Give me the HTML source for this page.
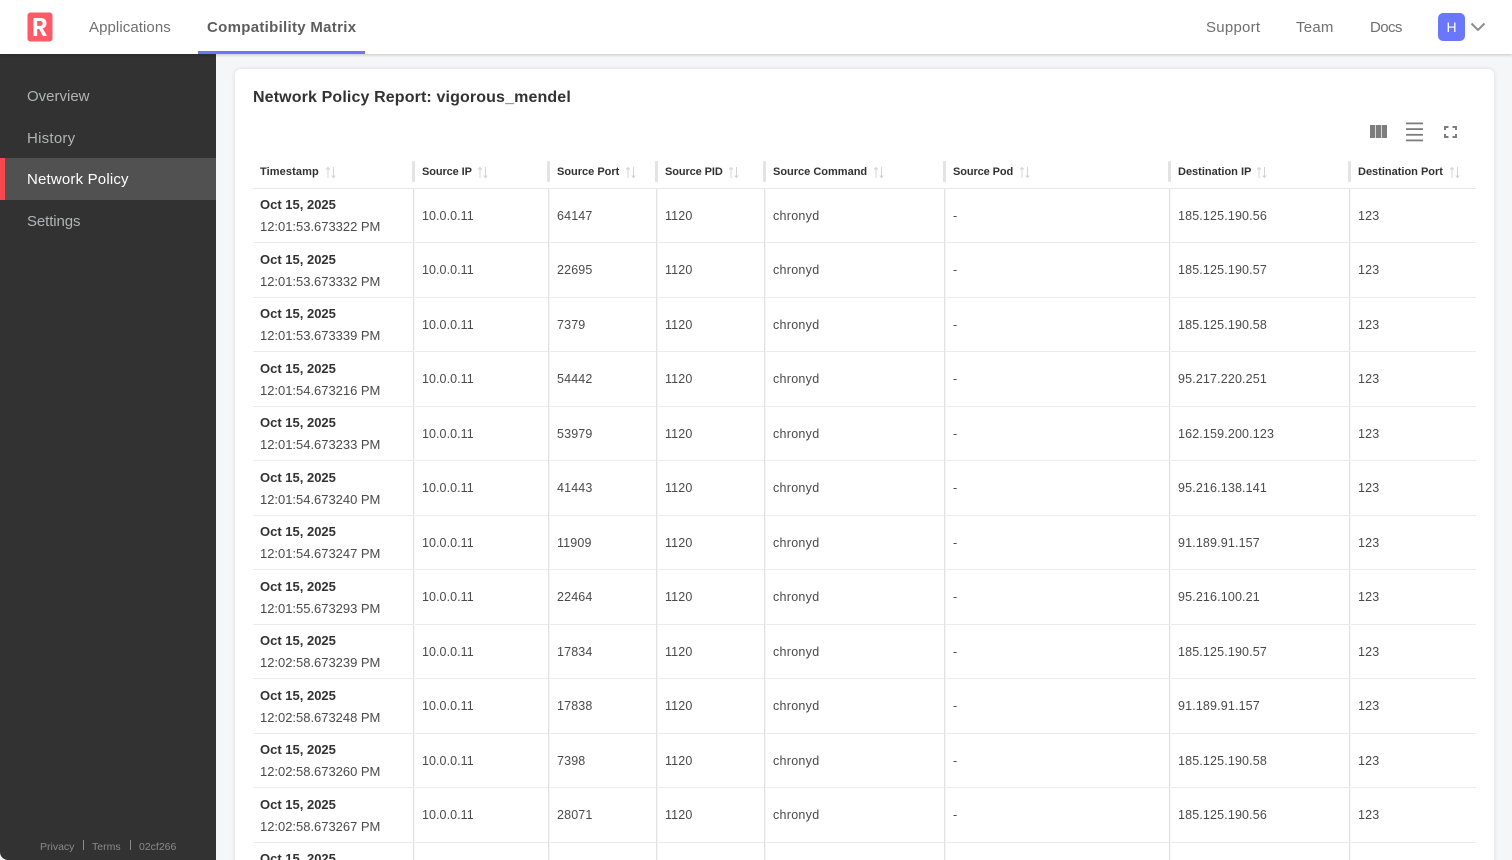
<!DOCTYPE html>
<html style="height:860px;overflow:hidden"><head><meta charset="utf-8"><style>
*{box-sizing:border-box}
html,body{margin:0;padding:0}
body{width:1512px;height:860px;overflow:hidden;background:#f5f6f8;position:relative;font-family:"Liberation Sans",sans-serif;color:#323232}
#wrap{position:absolute;left:0;top:0;width:1512px;height:860px;overflow:hidden}
.a{position:absolute;white-space:nowrap}
#top{left:0;top:0;width:1512px;height:54px;background:#fff;box-shadow:0 1px 3px rgba(0,0,0,.2);z-index:3}
#top .n{font-size:15px;color:#6f6f6f;top:18px;line-height:20px;letter-spacing:.25px}
#side{left:0;top:54px;width:216px;height:806px;background:#323232;border-bottom-left-radius:8px;z-index:2}
#side .s{left:27px;font-size:15px;color:#b0b4b4;line-height:20px}
#card{left:235px;top:69px;width:1259px;height:820px;background:#fff;border-radius:6px;box-shadow:0 0 4px rgba(0,0,0,.12)}
#table{left:253px;top:159px;width:1223px;font-size:12.5px;letter-spacing:.15px}
.hd{position:relative;height:29.5px;border-bottom:1px solid #e8e8e8}
.hd b{position:absolute;top:5px;line-height:16px;font-size:11px;color:#323232;letter-spacing:0}
.hd i{position:absolute;top:2px;width:3px;height:21px;margin-left:-1px;background:#e3e3e3;border-radius:1px}
.hd svg{position:absolute;top:7px}
.r{position:relative;height:54.5px;border-bottom:1px solid #ececec}
.r span{position:absolute;top:19px;line-height:16px;color:#4a4a4a}
.r em{position:absolute;top:0;bottom:-1px;width:2px;background:linear-gradient(90deg,#e2e2e2 50%,#f7f7f7 50%)}
.r .d{top:8.5px;font-weight:bold;font-size:13px;color:#323232;letter-spacing:0}
.r .t{top:30.5px;font-size:13px;color:#4a4a4a;letter-spacing:-.02px}
.r .c2{letter-spacing:.06px}.r .c5{letter-spacing:.28px}
.c1{left:7px}.c2{left:169px}.c3{left:304px}.c4{left:412px}.c5{left:520px}.c6{left:700px}.c7{left:925px}.c8{left:1105px}
.l1{left:160px}.l2{left:295px}.l3{left:403px}.l4{left:511px}.l5{left:691px}.l6{left:916px}.l7{left:1096px}
</style></head><body>
<div id="wrap">
<div class="a" id="top">
<svg class="a" style="left:27px;top:12px" width="26" height="30" viewBox="0 0 26 30"><rect x="0.5" y="0.5" width="25" height="29" rx="3" fill="#fb5a66"/><path fill-rule="evenodd" d="M6.500 24V6h7c4 0 6 2 6 5.300 0 2.600-1.400 4.400-3.800 5.100L20 24h-4.200l-3.500-7h-2.100v7zM10.200 13.900h3c1.600 0 2.400-.8 2.400-2.500S14.800 9 13.200 9h-3z" fill="#fff"/></svg>
<span class="a n" style="left:89px;letter-spacing:.08px">Applications</span>
<span class="a n" style="left:207px;font-weight:bold;color:#5d5d5d;letter-spacing:.3px">Compatibility Matrix</span>
<div class="a" style="left:198px;top:51px;width:167px;height:3px;background:#6a77fb"></div>
<span class="a n" style="left:1206px">Support</span>
<span class="a n" style="left:1296px">Team</span>
<span class="a n" style="left:1370px;letter-spacing:-.6px">Docs</span>
<div class="a" style="left:1438px;top:13px;width:27px;height:28px;border-radius:5px;background:#6a77fb;color:#fff;font-size:14px;line-height:28px;text-align:center">H</div>
<svg class="a" style="left:1470px;top:22px" width="16" height="10" viewBox="0 0 16 10"><path d="M1.500 1.500L8 8l6.500-6.500" fill="none" stroke="#8c8c8c" stroke-width="2"/></svg>
</div>
<div class="a" id="side">
<span class="a s" style="top:33px">Overview</span>
<span class="a s" style="top:75px;letter-spacing:.25px">History</span>
<div class="a" style="left:0;top:104px;width:216px;height:42px;background:#515151;border-left:5px solid #f7474f"></div>
<span class="a s" style="top:116px;color:#fff;letter-spacing:.18px">Network Policy</span>
<span class="a s" style="top:158px;letter-spacing:-.1px">Settings</span>
<span class="a" style="left:40px;top:786px;font-size:10.500px;line-height:14px;color:#8a8a8a">Privacy</span>
<div class="a" style="left:83px;top:786px;width:1px;height:10px;background:#8a8a8a"></div>
<span class="a" style="left:92px;top:786px;font-size:10.500px;line-height:14px;color:#8a8a8a">Terms</span>
<div class="a" style="left:130px;top:786px;width:1px;height:10px;background:#8a8a8a"></div>
<span class="a" style="left:139px;top:786px;font-size:10.500px;line-height:14px;color:#8a8a8a">02cf266</span>
</div>
<div class="a" id="card"></div>
<div class="a" style="left:253px;top:87px;font-size:16px;font-weight:bold;line-height:21px;color:#323232;letter-spacing:.13px">Network Policy Report: vigorous_mendel</div>
<svg class="a" style="left:1370px;top:122px" width="90" height="20" viewBox="0 0 90 20" fill="#7d7d7d"><rect x="0" y="3" width="5.300" height="13"/><rect x="6" y="3" width="5.300" height="13"/><rect x="12" y="3" width="5" height="13"/><rect x="36" y="0.500" width="17" height="1.800"/><rect x="36" y="6.200" width="17" height="1.800"/><rect x="36" y="11.900" width="17" height="1.800"/><rect x="36" y="17.500" width="17" height="1.800"/><path d="M75 8V5h3.500M82.500 5H86v3M86 12v3h-3.500M78.500 15H75v-3" fill="none" stroke="#7d7d7d" stroke-width="2"/></svg>
<div class="a" id="table">
<div class="hd">
<b class="c1" style="letter-spacing:.1px">Timestamp</b><svg style="left:72px" width="12" height="13" viewBox="0 0 12 13"><path d="M3 12V1.500M1.200 3.500L3 1.500 4.800 3.500M8.500 1v10.500M6.700 9.500l1.800 2 1.800-2" fill="none" stroke="#d4d4d4" stroke-width="1"/></svg>
<i class="l1"></i><b class="c2" style="letter-spacing:-.1px">Source IP</b><svg style="left:224px" width="12" height="13" viewBox="0 0 12 13"><path d="M3 12V1.500M1.200 3.500L3 1.500 4.800 3.500M8.500 1v10.500M6.700 9.500l1.800 2 1.800-2" fill="none" stroke="#d4d4d4" stroke-width="1"/></svg>
<i class="l2"></i><b class="c3">Source Port</b><svg style="left:372px" width="12" height="13" viewBox="0 0 12 13"><path d="M3 12V1.500M1.200 3.500L3 1.500 4.800 3.500M8.500 1v10.500M6.700 9.500l1.800 2 1.800-2" fill="none" stroke="#d4d4d4" stroke-width="1"/></svg>
<i class="l3"></i><b class="c4" style="letter-spacing:-.1px">Source PID</b><svg style="left:475px" width="12" height="13" viewBox="0 0 12 13"><path d="M3 12V1.500M1.200 3.500L3 1.500 4.800 3.500M8.500 1v10.500M6.700 9.500l1.800 2 1.800-2" fill="none" stroke="#d4d4d4" stroke-width="1"/></svg>
<i class="l4"></i><b class="c5">Source Command</b><svg style="left:620px" width="12" height="13" viewBox="0 0 12 13"><path d="M3 12V1.500M1.200 3.500L3 1.500 4.800 3.500M8.500 1v10.500M6.700 9.500l1.800 2 1.800-2" fill="none" stroke="#d4d4d4" stroke-width="1"/></svg>
<i class="l5"></i><b class="c6" style="letter-spacing:-.1px">Source Pod</b><svg style="left:766px" width="12" height="13" viewBox="0 0 12 13"><path d="M3 12V1.500M1.200 3.500L3 1.500 4.800 3.500M8.500 1v10.500M6.700 9.500l1.800 2 1.800-2" fill="none" stroke="#d4d4d4" stroke-width="1"/></svg>
<i class="l6"></i><b class="c7">Destination IP</b><svg style="left:1003px" width="12" height="13" viewBox="0 0 12 13"><path d="M3 12V1.500M1.200 3.500L3 1.500 4.800 3.500M8.500 1v10.500M6.700 9.500l1.800 2 1.800-2" fill="none" stroke="#d4d4d4" stroke-width="1"/></svg>
<i class="l7"></i><b class="c8">Destination Port</b><svg style="left:1196px" width="12" height="13" viewBox="0 0 12 13"><path d="M3 12V1.500M1.200 3.500L3 1.500 4.800 3.500M8.500 1v10.500M6.700 9.500l1.800 2 1.800-2" fill="none" stroke="#d4d4d4" stroke-width="1"/></svg>
</div>
<div class="r"><span class="c1 d">Oct 15, 2025</span><span class="c1 t">12:01:53.673322 PM</span><em class="l1"></em><span class="c2">10.0.0.11</span><em class="l2"></em><span class="c3">64147</span><em class="l3"></em><span class="c4">1120</span><em class="l4"></em><span class="c5">chronyd</span><em class="l5"></em><span class="c6">-</span><em class="l6"></em><span class="c7">185.125.190.56</span><em class="l7"></em><span class="c8">123</span></div>
<div class="r"><span class="c1 d">Oct 15, 2025</span><span class="c1 t">12:01:53.673332 PM</span><em class="l1"></em><span class="c2">10.0.0.11</span><em class="l2"></em><span class="c3">22695</span><em class="l3"></em><span class="c4">1120</span><em class="l4"></em><span class="c5">chronyd</span><em class="l5"></em><span class="c6">-</span><em class="l6"></em><span class="c7">185.125.190.57</span><em class="l7"></em><span class="c8">123</span></div>
<div class="r"><span class="c1 d">Oct 15, 2025</span><span class="c1 t">12:01:53.673339 PM</span><em class="l1"></em><span class="c2">10.0.0.11</span><em class="l2"></em><span class="c3">7379</span><em class="l3"></em><span class="c4">1120</span><em class="l4"></em><span class="c5">chronyd</span><em class="l5"></em><span class="c6">-</span><em class="l6"></em><span class="c7">185.125.190.58</span><em class="l7"></em><span class="c8">123</span></div>
<div class="r"><span class="c1 d">Oct 15, 2025</span><span class="c1 t">12:01:54.673216 PM</span><em class="l1"></em><span class="c2">10.0.0.11</span><em class="l2"></em><span class="c3">54442</span><em class="l3"></em><span class="c4">1120</span><em class="l4"></em><span class="c5">chronyd</span><em class="l5"></em><span class="c6">-</span><em class="l6"></em><span class="c7">95.217.220.251</span><em class="l7"></em><span class="c8">123</span></div>
<div class="r"><span class="c1 d">Oct 15, 2025</span><span class="c1 t">12:01:54.673233 PM</span><em class="l1"></em><span class="c2">10.0.0.11</span><em class="l2"></em><span class="c3">53979</span><em class="l3"></em><span class="c4">1120</span><em class="l4"></em><span class="c5">chronyd</span><em class="l5"></em><span class="c6">-</span><em class="l6"></em><span class="c7">162.159.200.123</span><em class="l7"></em><span class="c8">123</span></div>
<div class="r"><span class="c1 d">Oct 15, 2025</span><span class="c1 t">12:01:54.673240 PM</span><em class="l1"></em><span class="c2">10.0.0.11</span><em class="l2"></em><span class="c3">41443</span><em class="l3"></em><span class="c4">1120</span><em class="l4"></em><span class="c5">chronyd</span><em class="l5"></em><span class="c6">-</span><em class="l6"></em><span class="c7">95.216.138.141</span><em class="l7"></em><span class="c8">123</span></div>
<div class="r"><span class="c1 d">Oct 15, 2025</span><span class="c1 t">12:01:54.673247 PM</span><em class="l1"></em><span class="c2">10.0.0.11</span><em class="l2"></em><span class="c3">11909</span><em class="l3"></em><span class="c4">1120</span><em class="l4"></em><span class="c5">chronyd</span><em class="l5"></em><span class="c6">-</span><em class="l6"></em><span class="c7">91.189.91.157</span><em class="l7"></em><span class="c8">123</span></div>
<div class="r"><span class="c1 d">Oct 15, 2025</span><span class="c1 t">12:01:55.673293 PM</span><em class="l1"></em><span class="c2">10.0.0.11</span><em class="l2"></em><span class="c3">22464</span><em class="l3"></em><span class="c4">1120</span><em class="l4"></em><span class="c5">chronyd</span><em class="l5"></em><span class="c6">-</span><em class="l6"></em><span class="c7">95.216.100.21</span><em class="l7"></em><span class="c8">123</span></div>
<div class="r"><span class="c1 d">Oct 15, 2025</span><span class="c1 t">12:02:58.673239 PM</span><em class="l1"></em><span class="c2">10.0.0.11</span><em class="l2"></em><span class="c3">17834</span><em class="l3"></em><span class="c4">1120</span><em class="l4"></em><span class="c5">chronyd</span><em class="l5"></em><span class="c6">-</span><em class="l6"></em><span class="c7">185.125.190.57</span><em class="l7"></em><span class="c8">123</span></div>
<div class="r"><span class="c1 d">Oct 15, 2025</span><span class="c1 t">12:02:58.673248 PM</span><em class="l1"></em><span class="c2">10.0.0.11</span><em class="l2"></em><span class="c3">17838</span><em class="l3"></em><span class="c4">1120</span><em class="l4"></em><span class="c5">chronyd</span><em class="l5"></em><span class="c6">-</span><em class="l6"></em><span class="c7">91.189.91.157</span><em class="l7"></em><span class="c8">123</span></div>
<div class="r"><span class="c1 d">Oct 15, 2025</span><span class="c1 t">12:02:58.673260 PM</span><em class="l1"></em><span class="c2">10.0.0.11</span><em class="l2"></em><span class="c3">7398</span><em class="l3"></em><span class="c4">1120</span><em class="l4"></em><span class="c5">chronyd</span><em class="l5"></em><span class="c6">-</span><em class="l6"></em><span class="c7">185.125.190.58</span><em class="l7"></em><span class="c8">123</span></div>
<div class="r"><span class="c1 d">Oct 15, 2025</span><span class="c1 t">12:02:58.673267 PM</span><em class="l1"></em><span class="c2">10.0.0.11</span><em class="l2"></em><span class="c3">28071</span><em class="l3"></em><span class="c4">1120</span><em class="l4"></em><span class="c5">chronyd</span><em class="l5"></em><span class="c6">-</span><em class="l6"></em><span class="c7">185.125.190.56</span><em class="l7"></em><span class="c8">123</span></div>
<div class="r" style="border-bottom:0"><span class="c1 d">Oct 15, 2025</span><em class="l1"></em><em class="l2"></em><em class="l3"></em><em class="l4"></em><em class="l5"></em><em class="l6"></em><em class="l7"></em></div>
</div>
</div>
</body></html>
